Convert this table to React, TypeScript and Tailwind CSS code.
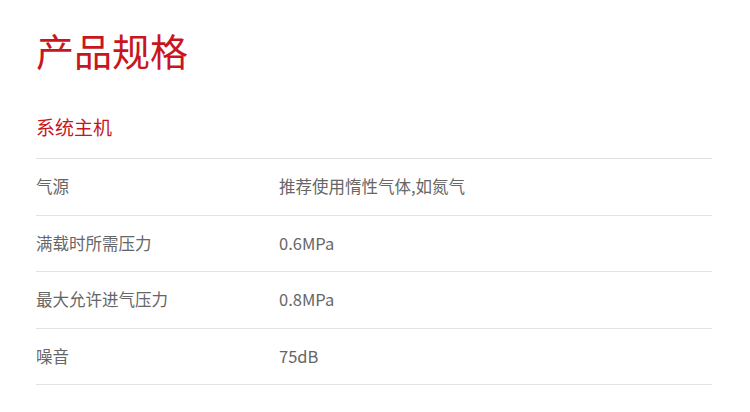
const specs = [
  { label: '气源', value: '推荐使用惰性气体,如氮气' },
  { label: '满载时所需压力', value: '0.6MPa' },
  { label: '最大允许进气压力', value: '0.8MPa' },
  { label: '噪音', value: '75dB' },
];

export default function App() {
  return (
    <div
      className="w-[750px] h-[412px] bg-white pl-[36px] pr-[38px] pt-[30px] overflow-hidden"
      style={{ fontFamily: '"Microsoft YaHei", "Noto Sans CJK SC", "Noto Sans", sans-serif' }}
    >
      <h1 className="text-[38px] leading-[40px] text-[#c8161e]">产品规格</h1>
      <div className="mt-[47px] pb-[21px] border-b border-[#e3e3e3]">
        <h2 className="text-[19px] leading-[20px] text-[#c8161e]">系统主机</h2>
      </div>
      {specs.map((row) => (
        <div
          key={row.label}
          className="h-[56.5px] flex items-center border-b border-[#e3e3e3] text-[16.5px] text-[#666666]"
        >
          <div className="w-[243px] shrink-0">{row.label}</div>
          <div>{row.value}</div>
        </div>
      ))}
    </div>
  );
}
